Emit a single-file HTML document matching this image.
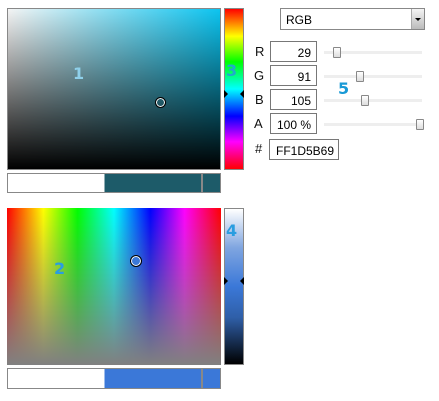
<!DOCTYPE html>
<html><head><style>
body{margin:0;width:439px;height:401px;background:#fff;font-family:"Liberation Sans",Tahoma,sans-serif;position:relative;overflow:hidden}
.a{position:absolute;box-sizing:border-box}
.num{position:absolute;font:bold 16px "DejaVu Sans",sans-serif}
.tb{position:absolute;border:1px solid #777;height:21px;box-sizing:border-box;font-size:12px;text-align:right;padding:4px 5px 0 0;background:#fff}
.lbl{position:absolute;font-size:13px;color:#111}
.track{position:absolute;left:324px;width:98px;height:3px;background:#eee}
.th{position:absolute;width:8px;height:11px;border:1px solid #888;background:linear-gradient(#fff,#ddd);box-sizing:border-box;border-radius:1px}
</style></head><body>
<div class="a" style="left:7px;top:8px;width:214px;height:162px;border:1px solid #888;background:linear-gradient(to bottom,rgba(0,0,0,0),rgba(0,0,0,0.55) 55%,#000),linear-gradient(to right,#f4f4f4,#0cc4f0)"></div>
<div class="a" style="left:155px;top:97px;width:11px;height:11px;border:1.5px solid #000;border-radius:50%;box-shadow:inset 0 0 0 1px #fff"></div>
<div class="num" style="left:73px;top:64px;color:#8fd0ea">1</div>
<div class="a" style="left:224px;top:8px;width:20px;height:162px;border:1px solid #888;background:linear-gradient(#f00,#ff0 17%,#0f0 33%,#0ff 50%,#00f 67%,#f0f 83%,#f00)"></div>
<div class="num" style="left:226px;top:61px;color:#22aacc">3</div>
<div class="a" style="left:224px;top:90px;width:0;height:0;border:4px solid transparent;border-left-color:#000"></div>
<div class="a" style="left:236px;top:90px;width:0;height:0;border:4px solid transparent;border-right-color:#000"></div>
<div class="a" style="left:7px;top:173px;width:195px;height:20px;border:1px solid #888;background:linear-gradient(to right,#fff 50%,#1d5b69 50%)"></div>
<div class="a" style="left:202px;top:173px;width:19px;height:20px;border:1px solid #888;background:#1d5b69"></div>

<div class="a" style="left:7px;top:208px;width:214px;height:157px;background:linear-gradient(to bottom,rgba(128,128,128,0),#808080),linear-gradient(to right,#f00,#ff0 17%,#0f0 33%,#0ff 50%,#00f 67%,#f0f 83%,#f00)"></div>
<div class="a" style="left:130px;top:255px;width:12px;height:12px;border:1.5px solid #000;border-radius:50%;background:#3b78d8;box-shadow:inset 0 0 0 1px #fff"></div>
<div class="num" style="left:54px;top:259px;color:#2a9de0">2</div>
<div class="a" style="left:224px;top:208px;width:20px;height:157px;border:1px solid #888;background:linear-gradient(#fff,#7fa5e0 25%,#3b78d8 50%,#2f5fa8 70%,#000)"></div>
<div class="num" style="left:226px;top:221px;color:#2a9de0">4</div>
<div class="a" style="left:224px;top:277px;width:0;height:0;border:4px solid transparent;border-left-color:#000"></div>
<div class="a" style="left:236px;top:277px;width:0;height:0;border:4px solid transparent;border-right-color:#000"></div>
<div class="a" style="left:7px;top:368px;width:195px;height:21px;border:1px solid #888;background:linear-gradient(to right,#fff 50%,#3b78d8 50%)"></div>
<div class="a" style="left:202px;top:368px;width:19px;height:21px;border:1px solid #888;background:#3b78d8"></div>

<div class="a" style="left:280px;top:8px;width:145px;height:22px;border:1px solid #888;background:#fff;font-size:12px;padding:4px 0 0 5px">RGB</div>
<div class="a" style="left:411px;top:9px;width:13px;height:20px;background:linear-gradient(#f4f4f4,#bbb);border-left:1px solid #aaa"></div>
<div class="a" style="left:415px;top:18px;border:3px solid transparent;border-top:3px solid #000"></div>

<div class="lbl" style="left:255px;top:44px">R</div>
<div class="lbl" style="left:254px;top:68px">G</div>
<div class="lbl" style="left:255px;top:92px">B</div>
<div class="lbl" style="left:254px;top:116px">A</div>
<div class="lbl" style="left:255px;top:141px">#</div>
<div class="tb" style="left:270px;top:41px;width:47px">29</div>
<div class="tb" style="left:270px;top:65px;width:47px">91</div>
<div class="tb" style="left:270px;top:89px;width:47px">105</div>
<div class="tb" style="left:270px;top:113px;width:47px">100 %</div>
<div class="tb" style="left:269px;top:139px;width:70px;text-align:left;padding-left:6px">FF1D5B69</div>
<div class="track" style="top:51px"></div><div class="th" style="left:333px;top:47px"></div>
<div class="track" style="top:75px"></div><div class="th" style="left:356px;top:71px"></div>
<div class="track" style="top:99px"></div><div class="th" style="left:361px;top:95px"></div>
<div class="track" style="top:123px"></div><div class="th" style="left:416px;top:119px"></div>
<div class="num" style="left:338px;top:79px;color:#1a9ad6">5</div>
</body></html>
